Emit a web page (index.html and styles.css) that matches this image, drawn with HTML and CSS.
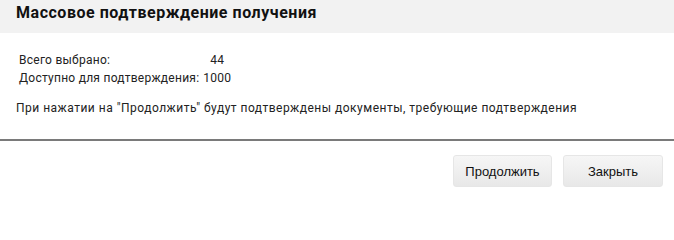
FILE: index.html
```html
<!DOCTYPE html>
<html lang="ru">
<head>
<meta charset="utf-8">
<link rel="stylesheet" href="styles.css">
</head>
<body>
<div class="dialog">
  <div class="dialog-header">
    <h1 class="dialog-title">Массовое подтверждение получения</h1>
  </div>
  <div class="dialog-body">
    <table class="stats">
      <tr><td class="stats-label">Всего выбрано:</td><td class="stats-value">44</td></tr>
      <tr><td class="stats-label">Доступно для подтверждения:</td><td class="stats-value">1000</td></tr>
    </table>
    <p class="note">При нажатии на "Продолжить" будут подтверждены документы, требующие подтверждения</p>
  </div>
  <div class="dialog-footer">
    <button class="btn">Продолжить</button>
    <button class="btn">Закрыть</button>
  </div>
</div>
</body>
</html>
```
FILE: styles.css
```css
html, body {
  margin: 0;
  padding: 0;
  background: #ffffff;
}
body {
  font-family: Roboto, "Liberation Sans", Arial, sans-serif;
  color: #222222;
  width: 674px;
}
.dialog-header {
  background: #f2f2f2;
  height: 33px;
  box-sizing: border-box;
  padding: 3px 16px 0;
}
.dialog-title {
  margin: 0;
  font-size: 16px;
  line-height: 19px;
  font-weight: bold;
  letter-spacing: 0.53px;
  color: #111111;
}
.dialog-body {
  padding: 17px 16px 0;
  height: 108px;
  box-sizing: border-box;
  border-bottom: 2px solid #7a7a7a;
}
.stats {
  border-spacing: 2px;
  font-size: 12px;
  letter-spacing: 0.26px;
}
.stats td {
  padding: 1px;
  line-height: 14px;
  white-space: nowrap;
}
.stats-value {
  text-align: center;
}
.note {
  margin: 13px 0 0;
  font-size: 12px;
  line-height: 14px;
  letter-spacing: 0.49px;
}
.dialog-footer {
  display: flex;
  justify-content: flex-end;
  gap: 11px;
  padding: 14px 11px 0 0;
}
.btn {
  height: 32px;
  width: 100px;
  font-family: "Liberation Sans", Arial, sans-serif;
  font-size: 13px;
  color: #111111;
  border: 1px solid #e6e6e6;
  border-radius: 3px;
  background: linear-gradient(#f6f6f6, #e8e8e8);
  padding: 0;
}
.btn:first-child {
  width: 99px;
}
```
